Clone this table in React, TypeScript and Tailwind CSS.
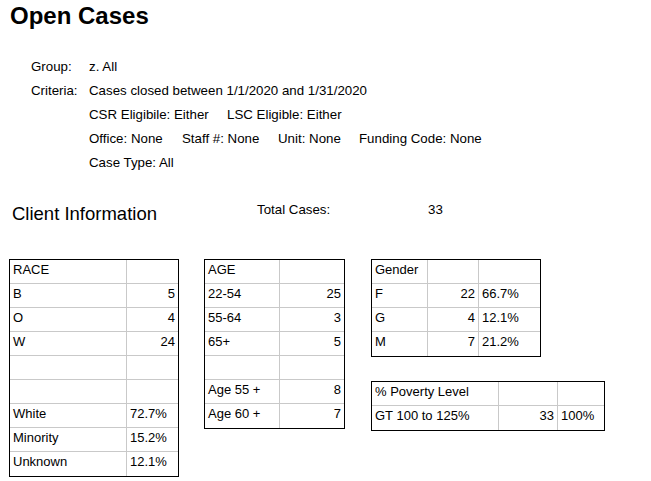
import React from "react";

type Cell = { text?: string; align?: "left" | "right" };

interface GridTableProps {
  width: string;
  cols: string;
  rows: Cell[][];
}

function GridTable({ width, cols, rows }: GridTableProps) {
  return (
    <div className={`${width} border border-black`}>
      <div className={`grid ${cols}`}>
        {rows.map((row, r) =>
          row.map((cell, c) => {
            const lastCol = c === row.length - 1;
            const lastRow = r === rows.length - 1;
            return (
              <div
                key={`${r}-${c}`}
                className={[
                  "h-[24px] pt-[2px] leading-4 whitespace-nowrap border-[#c9c9c9]",
                  lastCol ? "" : "border-r",
                  lastRow ? "" : "border-b",
                  cell.align === "right" ? "text-right pr-[3px]" : "pl-[3px]",
                ].join(" ")}
              >
                {cell.text ?? ""}
              </div>
            );
          })
        )}
      </div>
    </div>
  );
}

const L = (text = ""): Cell => ({ text, align: "left" });
const R = (text = ""): Cell => ({ text, align: "right" });

const raceRows: Cell[][] = [
  [L("RACE"), L()],
  [L("B"), R("5")],
  [L("O"), R("4")],
  [L("W"), R("24")],
  [L(), L()],
  [L(), L()],
  [L("White"), L("72.7%")],
  [L("Minority"), L("15.2%")],
  [L("Unknown"), L("12.1%")],
];

const ageRows: Cell[][] = [
  [L("AGE"), L()],
  [L("22-54"), R("25")],
  [L("55-64"), R("3")],
  [L("65+"), R("5")],
  [L(), L()],
  [L("Age 55 +"), R("8")],
  [L("Age 60 +"), R("7")],
];

const genderRows: Cell[][] = [
  [L("Gender"), L(), L()],
  [L("F"), R("22"), L("66.7%")],
  [L("G"), R("4"), L("12.1%")],
  [L("M"), R("7"), L("21.2%")],
];

const povertyRows: Cell[][] = [
  [L("% Poverty Level"), L(), L()],
  [L("GT 100 to 125%"), R("33"), L("100%")],
];

export default function App() {
  return (
    <div className="w-[651px] h-[481px] overflow-hidden bg-white text-black font-['Liberation_Sans',Arial,sans-serif] text-[13px]">
      <h1 className="pl-[10px] text-[24px] font-bold leading-[32px]">
        Open Cases
      </h1>

      {/* report criteria */}
      <div className="mt-[23px] pl-[31px] grid grid-cols-[58px_1fr] leading-[24px] text-[13.3px]">
        <div>Group:</div>
        <div>z. All</div>
        <div>Criteria:</div>
        <div>Cases closed between 1/1/2020 and 1/31/2020</div>
        <div />
        <div className="flex">
          <span className="w-[138px]">CSR Eligibile: Either</span>
          <span>LSC Eligible: Either</span>
        </div>
        <div />
        <div className="flex">
          <span className="w-[93px]">Office: None</span>
          <span className="w-[96px]">Staff #: None</span>
          <span className="w-[81px]">Unit: None</span>
          <span>Funding Code: None</span>
        </div>
        <div />
        <div>Case Type: All</div>
      </div>

      <div className="mt-[23px] flex items-start leading-[24px] text-[13.3px]">
        <span className="mt-[4px] pl-[12px] w-[257px] text-[18.5px]">
          Client Information
        </span>
        <span className="w-[171px]">Total Cases:</span>
        <span>33</span>
      </div>

      {/* tables */}
      <div className="mt-[33px] pl-[9px] flex items-start">
        <GridTable width="w-[170px]" cols="grid-cols-[117px_51px]" rows={raceRows} />
        <div className="ml-[25px]">
          <GridTable width="w-[141px]" cols="grid-cols-[75px_64px]" rows={ageRows} />
        </div>
        <div className="ml-[26px] flex flex-col gap-[24px]">
          <GridTable
            width="w-[170px]"
            cols="grid-cols-[56px_51px_61px]"
            rows={genderRows}
          />
          <GridTable
            width="w-[234px]"
            cols="grid-cols-[127px_59px_46px]"
            rows={povertyRows}
          />
        </div>
      </div>
    </div>
  );
}
